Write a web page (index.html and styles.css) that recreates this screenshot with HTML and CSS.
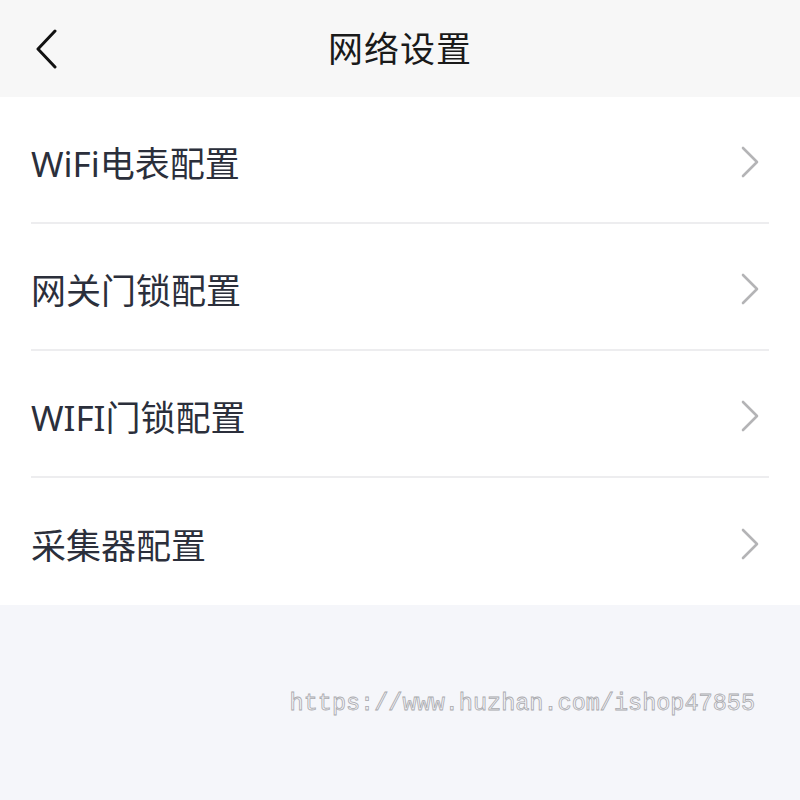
FILE: index.html
```html
<!DOCTYPE html>
<html lang="zh-CN">
<head>
   <meta charset="UTF-8">
   <meta name="viewport" content="width=device-width, initial-scale=1.0">
   <title>网络设置</title>
   <link rel="stylesheet" href="styles.css">
</head>
<body>
   <div class="page">
       <div class="nav-bar">
           <div class="back-button">
               <svg width="24" height="40" viewBox="0 0 24 40">
                   <polyline points="20,2 3,20 20,38" fill="none" stroke="#111" stroke-width="3" stroke-linecap="round" stroke-linejoin="round"/>
               </svg>
           </div>
           <div class="nav-title">网络设置</div>
       </div>

       <div class="menu-list">
           <div class="menu-item">
               <span class="menu-label">WiFi电表配置</span>
               <svg class="arrow" width="20" height="32" viewBox="0 0 20 32">
                   <polyline points="3,2 17,16 3,30" fill="none" stroke="#b4b4b6" stroke-width="2.6" stroke-linecap="round" stroke-linejoin="round"/>
               </svg>
           </div>
           <div class="menu-item">
               <span class="menu-label">网关门锁配置</span>
               <svg class="arrow" width="20" height="32" viewBox="0 0 20 32">
                   <polyline points="3,2 17,16 3,30" fill="none" stroke="#b4b4b6" stroke-width="2.6" stroke-linecap="round" stroke-linejoin="round"/>
               </svg>
           </div>
           <div class="menu-item">
               <span class="menu-label">WIFI门锁配置</span>
               <svg class="arrow" width="20" height="32" viewBox="0 0 20 32">
                   <polyline points="3,2 17,16 3,30" fill="none" stroke="#b4b4b6" stroke-width="2.6" stroke-linecap="round" stroke-linejoin="round"/>
               </svg>
           </div>
           <div class="menu-item">
               <span class="menu-label">采集器配置</span>
               <svg class="arrow" width="20" height="32" viewBox="0 0 20 32">
                   <polyline points="3,2 17,16 3,30" fill="none" stroke="#b4b4b6" stroke-width="2.6" stroke-linecap="round" stroke-linejoin="round"/>
               </svg>
           </div>
       </div>

       <div class="footer">
           <span class="shop-link">https://www.huzhan.com/ishop47855</span>
       </div>
   </div>
</body>
</html>
```

FILE: styles.css
```css
body {
    margin: 0;
    background-color: #f5f6fa;
    font-family: "Noto Sans", "Noto Sans CJK SC", sans-serif;
}
.page {
    width: 800px;
    height: 800px;
    display: flex;
    flex-direction: column;
    overflow: hidden;
}
.nav-bar {
    height: 97px;
    background-color: #f7f7f7;
    display: flex;
    align-items: center;
    justify-content: center;
    position: relative;
}
.back-button {
    position: absolute;
    left: 35px;
    top: 29px;
    width: 24px;
    height: 40px;
}
.nav-title {
    font-family: "Noto Sans CJK SC", sans-serif;
    font-size: 35px;
    color: #1a1a1a;
    letter-spacing: 1px;
    margin-top: -4px;
}
.menu-list {
    background-color: #ffffff;
    padding: 0 31px;
}
.menu-item {
    height: 127px;
    box-sizing: border-box;
    display: flex;
    align-items: center;
    justify-content: space-between;
    border-bottom: 2px solid #ededef;
}
.menu-item:last-child {
    border-bottom: none;
}
.menu-label {
    font-family: "Noto Sans", "Noto Sans CJK SC", sans-serif;
    font-size: 35px;
    color: #2b2f3b;
    margin-top: 4px;
}
.arrow {
    margin-right: 9px;
    margin-top: 4px;
}
.footer {
    flex: 1;
    display: flex;
    justify-content: flex-end;
    padding: 85px 45px 0 0;
}
.shop-link {
    font-family: "Liberation Mono", monospace;
    font-size: 23.5px;
    color: transparent;
    -webkit-text-stroke: 0.8px #a9a9ad;
    height: 30px;
}
```
